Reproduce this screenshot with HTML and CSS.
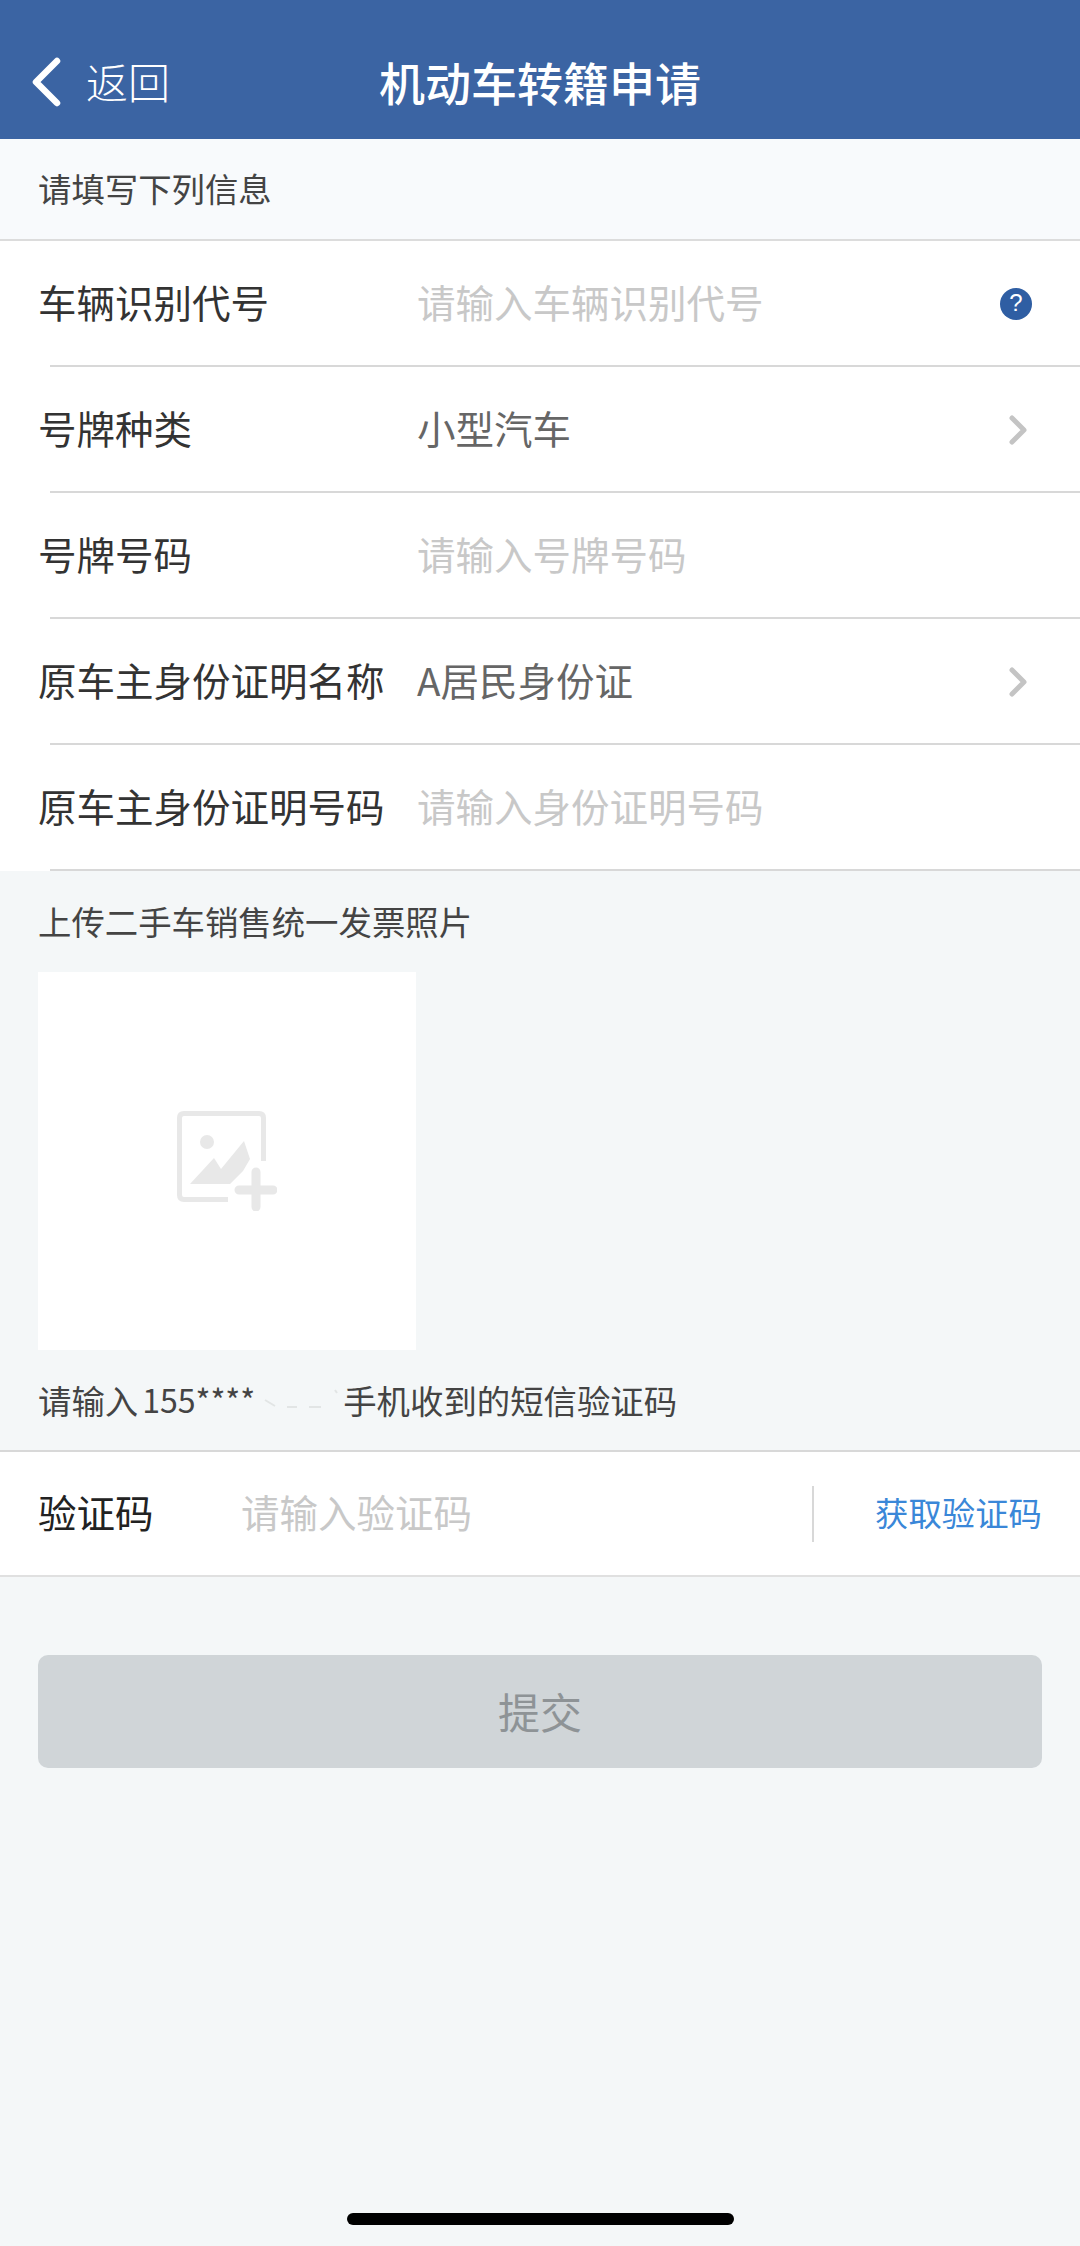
FILE: index.html
```html
<!DOCTYPE html>
<html lang="zh-CN">
<head>
<meta charset="utf-8">
<title>机动车转籍申请</title>
<link rel="stylesheet" href="styles.css">
</head>
<body>
<div class="page">
  <header class="nav">
    <div class="back">
      <svg class="back-icon" viewBox="0 0 32 50" width="32" height="50"><path d="M26 4 L5 25 L26 46" fill="none" stroke="#fff" stroke-width="6.5" stroke-linecap="round" stroke-linejoin="round"/></svg>
      <span>返回</span>
    </div>
    <h1 class="nav-title">机动车转籍申请</h1>
  </header>
  <div class="section-head">请填写下列信息</div>
  <section class="form">
    <div class="row">
      <span class="label">车辆识别代号</span>
      <span class="value ph">请输入车辆识别代号</span>
      <svg class="help" viewBox="0 0 32 32" width="32" height="32"><circle cx="16" cy="16" r="16" fill="#2f5ea3"/><text x="16" y="23" class="help-q" text-anchor="middle">?</text></svg>
    </div>
    <div class="row">
      <span class="label">号牌种类</span>
      <span class="value">小型汽车</span>
      <svg class="chev" viewBox="0 0 20 30" width="20" height="30"><path d="M3 3 L15 15 L3 27" fill="none" stroke="#c4c4c4" stroke-width="5" stroke-linecap="round" stroke-linejoin="round"/></svg>
    </div>
    <div class="row">
      <span class="label">号牌号码</span>
      <span class="value ph">请输入号牌号码</span>
    </div>
    <div class="row">
      <span class="label">原车主身份证明名称</span>
      <span class="value">A居民身份证</span>
      <svg class="chev" viewBox="0 0 20 30" width="20" height="30"><path d="M3 3 L15 15 L3 27" fill="none" stroke="#c4c4c4" stroke-width="5" stroke-linecap="round" stroke-linejoin="round"/></svg>
    </div>
    <div class="row">
      <span class="label">原车主身份证明号码</span>
      <span class="value ph">请输入身份证明号码</span>
    </div>
  </section>
  <div class="upload-label">上传二手车销售统一发票照片</div>
  <div class="upload-box">
    <svg viewBox="0 0 100 100" width="100" height="100">
      <path d="M51 88.5 H7 Q2.5 88.5 2.5 84 V7 Q2.5 2.5 7 2.5 H82 Q86.5 2.5 86.5 7 V50" fill="none" stroke="#e8e8e8" stroke-width="5"/>
      <circle cx="30" cy="31" r="7" fill="#e8e8e8"/>
      <path d="M13 73 L37 47 L44 58 L67 30 L73 48 L66 60 L53 73 Z" fill="#e8e8e8"/>
      <path d="M79 61 V96 M62 79 H96" fill="none" stroke="#e8e8e8" stroke-width="9" stroke-linecap="round"/>
    </svg>
  </div>
  <div class="sms-hint">请输入<span class="phone">155****</span><svg class="smudge" viewBox="0 0 88 30" width="88" height="30"><path d="M10 17 L20 23 M32 24 H42 M54 24 H66 M80 7 L82 10" fill="none" stroke="#e2e5e5" stroke-width="2"/></svg>手机收到的短信验证码</div>
  <div class="code-row">
    <span class="code-label">验证码</span>
    <span class="code-ph">请输入验证码</span>
    <span class="code-sep"></span>
    <span class="code-get">获取验证码</span>
  </div>
  <button class="submit" type="button">提交</button>
  <div class="home-bar"></div>
</div>
</body>
</html>
```

FILE: styles.css
```css
* { box-sizing: border-box; }
html, body { margin: 0; padding: 0; }
body {
  width: 1080px;
  height: 2246px;
  background: #f4f7f8;
  font-family: "Noto Sans CJK SC", "Liberation Sans", sans-serif;
  overflow: hidden;
}
.page { position: relative; height: 2246px; display: flex; flex-direction: column; }
.nav {
  position: relative;
  height: 139px;
  background: #3b64a3;
  color: #fff;
  display: flex;
  align-items: flex-end;
  justify-content: center;
  padding-bottom: 28px;
  flex: none;
}
.back {
  position: absolute;
  left: 31px;
  bottom: 31px;
  display: flex;
  align-items: center;
  gap: 23px;
  font-size: 42px;
  line-height: 50px;
  font-weight: 300;
}
.back span { padding-bottom: 2px; }
.nav-title { margin: 0; font-size: 46px; line-height: 60px; font-weight: 500; }
.section-head {
  height: 102px;
  background: #f8fafc;
  border-bottom: 2px solid #dcdcdc;
  padding: 0 38px 3px;
  display: flex;
  align-items: center;
  font-size: 33.4px;
  color: #444;
  flex: none;
}
.form { background: #fff; flex: none; }
.row {
  height: 126px;
  position: relative;
  display: flex;
  align-items: center;
  padding: 0 38px;
}
.row::after {
  content: "";
  position: absolute;
  left: 50px;
  right: 0;
  bottom: 0;
  height: 2px;
  background: #d8d8d8;
}
.label { width: 379px; flex: none; font-size: 38.5px; color: #333; white-space: nowrap; padding-bottom: 7px; }
.value { font-size: 38.5px; color: #666; flex: 1; white-space: nowrap; padding-bottom: 7px; }
.value.ph { color: #c8c8c8; }
.help { flex: none; margin-right: 10px; }
.help-q { font: 24px "Liberation Sans", sans-serif; fill: #fff; }
.chev { flex: none; margin-right: 13px; }
.upload-label {
  height: 101px;
  padding: 0 38px 2px;
  display: flex;
  align-items: center;
  font-size: 33.4px;
  color: #444;
  flex: none;
}
.upload-box {
  width: 378px;
  height: 378px;
  margin-left: 38px;
  background: #fff;
  display: flex;
  align-items: center;
  justify-content: center;
  flex: none;
}
.sms-hint {
  height: 100px;
  padding: 0 38px 2px;
  display: flex;
  align-items: center;
  font-size: 33.4px;
  color: #444;
  white-space: pre;
  flex: none;
}
.phone { font-size: 32px; margin-left: 4px; }
.smudge { flex: none; margin-bottom: 2px; }
.code-row {
  height: 127px;
  background: #fff;
  border-top: 2px solid #d8d8d8;
  border-bottom: 2px solid #e0e0e0;
  padding: 0 38px;
  display: flex;
  align-items: center;
  flex: none;
}
.code-label { width: 203px; flex: none; font-size: 38.5px; color: #222; padding-bottom: 5px; }
.code-ph { flex: 1; font-size: 38.5px; color: #c8c8c8; padding-bottom: 5px; }
.code-sep { width: 2px; height: 56px; background: #d8d8d8; margin-right: 61px; flex: none; }
.code-get { font-size: 33.4px; color: #3a87d8; white-space: nowrap; padding-bottom: 5px; }
.submit {
  margin: 78px 38px 0;
  height: 113px;
  border: none;
  border-radius: 10px;
  background: #d0d5d8;
  color: #8e9396;
  font-family: inherit;
  font-size: 42px;
  padding: 0 0 3px;
  flex: none;
}
.home-bar {
  position: absolute;
  left: 347px;
  top: 2213px;
  width: 387px;
  height: 12px;
  border-radius: 6px;
  background: #000;
}
```
